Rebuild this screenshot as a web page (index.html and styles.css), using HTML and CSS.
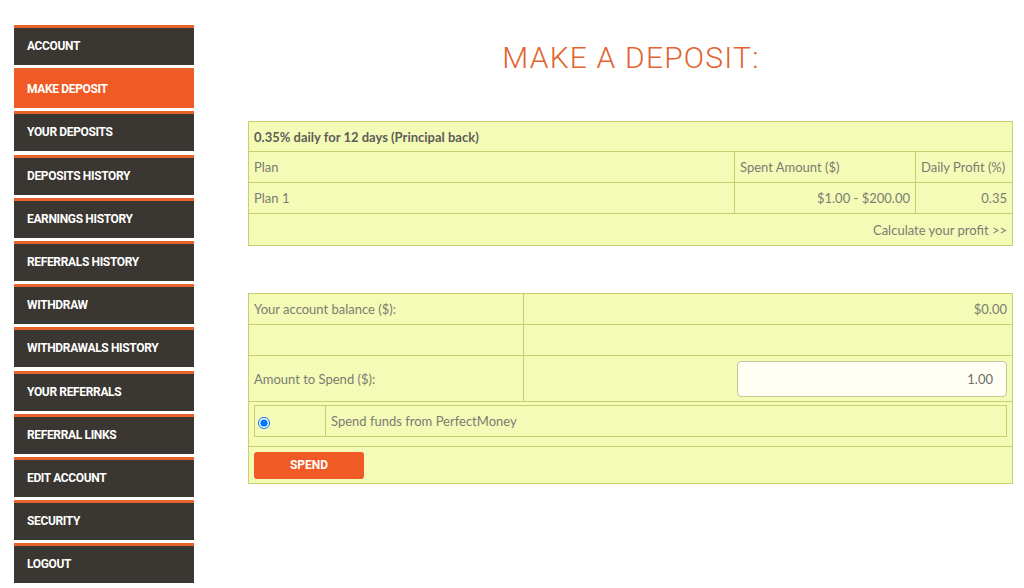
FILE: index.html
```html
<!DOCTYPE html>
<html>
<head>
    <title>Make a Deposit</title>
    <link rel="stylesheet" href="styles.css">
</head>
<body>
    <div class="page">
        <ul class="menu">
            <li><a href="#">Account</a></li>
            <li class="active"><a href="#">Make Deposit</a></li>
            <li><a href="#">Your Deposits</a></li>
            <li><a href="#">Deposits History</a></li>
            <li><a href="#">Earnings History</a></li>
            <li><a href="#">Referrals History</a></li>
            <li><a href="#">Withdraw</a></li>
            <li><a href="#">Withdrawals History</a></li>
            <li><a href="#">Your Referrals</a></li>
            <li><a href="#">Referral Links</a></li>
            <li><a href="#">Edit Account</a></li>
            <li><a href="#">Security</a></li>
            <li><a href="#">Logout</a></li>
        </ul>
        <div class="content">
            <h1>Make a Deposit:</h1>
            <table class="plan">
                <tr>
                    <td colspan="3" class="plan-title">0.35% daily for 12 days (Principal back)</td>
                </tr>
                <tr>
                    <td>Plan</td>
                    <td class="col-amount">Spent Amount ($)</td>
                    <td class="col-profit">Daily Profit (%)</td>
                </tr>
                <tr>
                    <td>Plan 1</td>
                    <td class="right">$1.00 - $200.00</td>
                    <td class="right">0.35</td>
                </tr>
                <tr class="calc-row">
                    <td colspan="3" class="right"><a href="#" class="calc">Calculate your profit &gt;&gt;</a></td>
                </tr>
            </table>
            <table class="spend">
                <tr>
                    <td class="label">Your account balance ($):</td>
                    <td class="right">$0.00</td>
                </tr>
                <tr class="empty">
                    <td>&nbsp;</td>
                    <td>&nbsp;</td>
                </tr>
                <tr class="amount-row">
                    <td>Amount to Spend ($):</td>
                    <td class="right"><input type="text" class="amount" value="1.00"></td>
                </tr>
                <tr>
                    <td colspan="2" class="nested-cell">
                        <table class="processors">
                            <tr>
                                <td class="radio-cell"><input type="radio" name="type" checked></td>
                                <td>Spend funds from PerfectMoney</td>
                            </tr>
                        </table>
                    </td>
                </tr>
                <tr>
                    <td colspan="2" class="button-cell"><button class="spend-btn">Spend</button></td>
                </tr>
            </table>
        </div>
    </div>
</body>
</html>
```

FILE: styles.css
```css
body {
    margin: 0;
    font-family: "Lato", "Open Sans", sans-serif;
    background-color: #fff;
}
.page {
    display: flex;
    align-items: flex-start;
}
.menu {
    list-style: none;
    margin: 0;
    padding: 25px 0 0 14px;
    width: 180px;
    display: flex;
    flex-direction: column;
    gap: 3.2px;
}
.menu li {
    background-color: #3a3631;
    border-top: 3px solid #e8622b;
    height: 37px;
}
.menu li.active {
    background-color: #f05a24;
}
.menu a {
    display: block;
    line-height: 37px;
    padding-left: 13px;
    color: #fff;
    text-decoration: none;
    text-transform: uppercase;
    font-family: "Roboto", sans-serif;
    font-weight: 700;
    font-size: 12px;
    letter-spacing: -0.35px;
}
.content {
    margin-left: 54px;
    width: 765px;
}
h1 {
    margin: 35px 0 41px;
    text-align: center;
    text-transform: uppercase;
    font-family: "Roboto", sans-serif;
    font-weight: 300;
    font-size: 30px;
    line-height: 45px;
    letter-spacing: 1.2px;
    color: #e2632f;
    padding-left: 1px;
}
table {
    border-collapse: collapse;
    width: 100%;
}
.plan, .spend {
    background-color: #f4fbb7;
    border: 1px solid #c7d06c;
}
.plan td, .spend > tbody > tr > td {
    border: 1px solid #c7d06c;
    height: 30px;
    padding: 0 5px;
    font-size: 13px;
    color: #7b7b72;
}
.plan .plan-title {
    font-weight: 700;
    color: #5e5e57;
    height: 29px;
}
.plan .calc-row td {
    height: 31px;
}
.col-amount {
    width: 170px;
}
.col-profit {
    width: 86px;
}
.right {
    text-align: right;
}
.calc {
    color: #7b7b72;
    text-decoration: none;
}
.spend {
    margin-top: 47px;
}
.spend > tbody > tr > td.label {
    width: 264px;
}
.spend > tbody > tr.amount-row > td {
    height: 45px;
}
.amount {
    width: 270px;
    height: 36px;
    box-sizing: border-box;
    border: 1px solid #c2c99a;
    border-radius: 4px;
    background-color: #fffff4;
    text-align: right;
    padding: 0 13px;
    font-family: "Lato", sans-serif;
    font-size: 13px;
    color: #6e6e66;
    vertical-align: middle;
}
.spend > tbody > tr > td.nested-cell {
    height: 41px;
    padding: 3px 5px 0;
    vertical-align: top;
}
.processors td {
    border: 1px solid #c7d06c;
    height: 30px;
    padding: 0 5px;
    font-size: 13px;
    color: #7b7b72;
}
.processors .radio-cell {
    width: 62px;
    padding-left: 3px;
}
.processors input {
    margin: 0;
    width: 12px;
    height: 12px;
    vertical-align: middle;
}
.spend > tbody > tr > td.button-cell {
    height: 36px;
}
.spend-btn {
    display: block;
    width: 110px;
    height: 27px;
    border: none;
    border-radius: 3px;
    background-color: #f05a24;
    color: #fff;
    font-family: "Roboto", sans-serif;
    font-weight: 700;
    font-size: 12px;
    text-transform: uppercase;
}
```
